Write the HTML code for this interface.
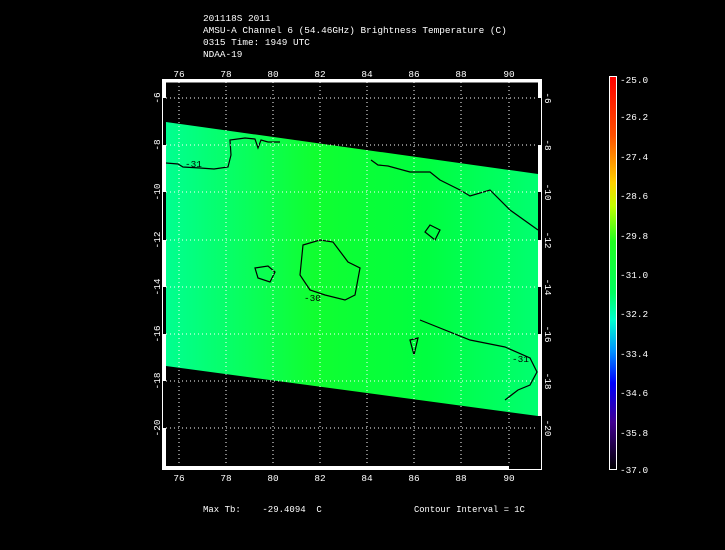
<!DOCTYPE html><html><head><style>body{margin:0;background:#000;width:725px;height:550px;overflow:hidden}svg{display:block}text{font-family:"Liberation Mono","DejaVu Sans Mono",monospace;fill:#fff;font-size:9.4px}</style></head><body>
<svg width="725" height="550" viewBox="0 0 725 550">
<defs>
<linearGradient id="sw" x1="0" y1="0" x2="1" y2="0"><stop offset="0" stop-color="#00ff90"/><stop offset="0.4" stop-color="#10ff30"/><stop offset="0.7" stop-color="#00ff40"/><stop offset="1" stop-color="#00ff70"/></linearGradient>
<linearGradient id="cb" x1="0" y1="0" x2="0" y2="1"><stop offset="0" stop-color="#ff0000"/><stop offset="0.15" stop-color="#ff5000"/><stop offset="0.27" stop-color="#ffd000"/><stop offset="0.33" stop-color="#c0ff00"/><stop offset="0.42" stop-color="#20ff20"/><stop offset="0.55" stop-color="#00ff60"/><stop offset="0.62" stop-color="#00ffd0"/><stop offset="0.7" stop-color="#0090ff"/><stop offset="0.78" stop-color="#0000ff"/><stop offset="0.88" stop-color="#400090"/><stop offset="1" stop-color="#000000"/></linearGradient>
</defs>
<text x="203" y="21">201118S 2011</text>
<text x="203" y="33">AMSU-A Channel 6 (54.46GHz) Brightness Temperature (C)</text>
<text x="203" y="45">0315 Time: 1949 UTC</text>
<text x="203" y="57">NDAA-19</text>
<polygon points="166,122 538,174 538,416 166,366" fill="url(#sw)"/>
<g fill="none" stroke="#000" stroke-width="1.2">
<path d="M166,163 L178,164 L183,167 L200,168 L214,169 L228,167 L231,155 L230,140 L245,138 L255,139 L258,148 L261,140 L268,142 L280,142"/>
<path d="M303,245 L320,240 L333,242 L348,262 L360,268 L355,295 L345,300 L325,295 L310,290 L300,275 Z"/>
<path d="M255,268 L268,266 L275,272 L270,282 L258,278 Z"/>
<path d="M371,160 L378,165 L388,166 L410,172 L430,172 L440,180 L460,190 L470,196 L490,190 L510,210 L538,230"/>
<path d="M430,225 L440,230 L435,240 L425,232 Z"/>
<path d="M410,340 L418,338 L414,355 Z"/>
<path d="M420,320 L470,340 L505,347 L530,358 L537,372 L530,385 L518,390 L505,400"/>
</g>
<text x="185" y="167" style="fill:#000">-31</text>
<text x="304" y="301" style="fill:#000">-30</text>
<text x="512" y="362" style="fill:#000">-31</text>
<g stroke="#fff" stroke-dasharray="1,3" stroke-width="1">
<path d="M179,82V466M226,82V466M273,82V466M320,82V466M367,82V466M414,82V466M461,82V466M509,82V466"/>
<path d="M166,98H538M166,145H538M166,192H538M166,240H538M166,287H538M166,334H538M166,381H538M166,428H538"/>
</g>
<rect x="162.5" y="79.5" width="379" height="390" fill="none" stroke="#fff"/>
<rect x="163" y="80" width="375" height="2.5" fill="#fff"/>
<rect x="163" y="80" width="3" height="18" fill="#fff"/>
<rect x="163" y="145" width="3" height="47" fill="#fff"/>
<rect x="163" y="240" width="3" height="47" fill="#fff"/>
<rect x="163" y="334" width="3" height="47" fill="#fff"/>
<rect x="163" y="428" width="3" height="38" fill="#fff"/>
<rect x="538" y="80" width="3" height="18" fill="#fff"/>
<rect x="538" y="145" width="3" height="47" fill="#fff"/>
<rect x="538" y="240" width="3" height="47" fill="#fff"/>
<rect x="538" y="334" width="3" height="82" fill="#fff"/>
<rect x="163" y="466" width="346" height="3" fill="#fff"/>
<g text-anchor="middle" style="font-size:10.5px">
<text x="179" y="77">76</text><text x="226" y="77">78</text><text x="273" y="77">80</text><text x="320" y="77">82</text><text x="367" y="77">84</text><text x="414" y="77">86</text><text x="461" y="77">88</text><text x="509" y="77">90</text>
<text x="179" y="481">76</text><text x="226" y="481">78</text><text x="273" y="481">80</text><text x="320" y="481">82</text><text x="367" y="481">84</text><text x="414" y="481">86</text><text x="461" y="481">88</text><text x="509" y="481">90</text>
</g>
<g text-anchor="middle" style="font-size:10.5px">
<text transform="translate(160,98) rotate(-90)">-6</text><text transform="translate(160,145) rotate(-90)">-8</text><text transform="translate(160,192) rotate(-90)">-10</text><text transform="translate(160,240) rotate(-90)">-12</text><text transform="translate(160,287) rotate(-90)">-14</text><text transform="translate(160,334) rotate(-90)">-16</text><text transform="translate(160,381) rotate(-90)">-18</text><text transform="translate(160,428) rotate(-90)">-20</text>
<text transform="translate(545,98) rotate(90)">-6</text><text transform="translate(545,145) rotate(90)">-8</text><text transform="translate(545,192) rotate(90)">-10</text><text transform="translate(545,240) rotate(90)">-12</text><text transform="translate(545,287) rotate(90)">-14</text><text transform="translate(545,334) rotate(90)">-16</text><text transform="translate(545,381) rotate(90)">-18</text><text transform="translate(545,428) rotate(90)">-20</text>
</g>
<rect x="609.5" y="76.5" width="7" height="393" fill="url(#cb)" stroke="#fff"/>
<g style="font-size:10px">
<text x="620" y="83">-25.0</text><text x="620" y="120">-26.2</text><text x="620" y="160">-27.4</text><text x="620" y="199">-28.6</text><text x="620" y="239">-29.8</text><text x="620" y="278">-31.0</text><text x="620" y="317">-32.2</text><text x="620" y="357">-33.4</text><text x="620" y="396">-34.6</text><text x="620" y="436">-35.8</text><text x="620" y="473">-37.0</text>
</g>
<text x="203" y="512" xml:space="preserve" style="font-size:9px">Max Tb:    -29.4094  C</text>
<text x="414" y="512" style="font-size:8.8px">Contour Interval = 1C</text>
</svg></body></html>
